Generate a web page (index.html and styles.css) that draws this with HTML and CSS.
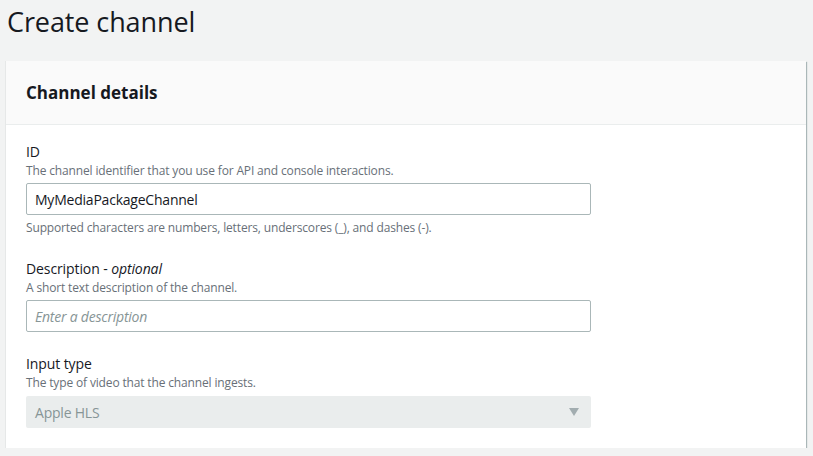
FILE: index.html
```html
<!DOCTYPE html>
<html>
<head>
<meta charset="utf-8">
<link rel="stylesheet" href="styles.css">
</head>
<body>
<h1 class="page-title">Create channel</h1>
<section class="card">
  <header class="card-header"><h2>Channel details</h2></header>
  <div class="card-body">
    <div class="field">
      <label class="label">ID</label>
      <div class="desc">The channel identifier that you use for API and console interactions.</div>
      <div class="input">MyMediaPackageChannel</div>
      <div class="hint">Supported characters are numbers, letters, underscores (_), and dashes (-).</div>
    </div>
    <div class="field">
      <label class="label">Description - <i>optional</i></label>
      <div class="desc">A short text description of the channel.</div>
      <div class="input placeholder">Enter a description</div>
    </div>
    <div class="field field-last">
      <label class="label">Input type</label>
      <div class="desc">The type of video that the channel ingests.</div>
      <div class="select">
        <span>Apple HLS</span>
        <svg class="caret" width="10" height="8" viewBox="0 0 10 8"><path d="M0 0H10L5 8Z" fill="#a2adb0"/></svg>
      </div>
    </div>
  </div>
</section>
</body>
</html>
```
FILE: styles.css
```css
* { box-sizing: border-box; }
html, body { margin: 0; padding: 0; }
body {
  background: #f2f3f3;
  font-family: "Open Sans", "Noto Sans", sans-serif;
  color: #16191f;
  padding: 0 7px 0 5px;
}
.page-title {
  margin: 0;
  padding: 3px 0 0 2px;
  height: 61px;
  font-size: 27px;
  font-weight: 400;
  line-height: 38px;
  letter-spacing: -0.1px;
}
.card {
  background: #fff;
  border-left: 1px solid #e6e8e8;
  box-shadow: 1px 1px 1px 0 #aab7b8;
  height: 387px;
}
.card-header {
  background: #fafafa;
  border-bottom: 1px solid #eaeded;
  height: 64px;
  display: flex;
  align-items: center;
  padding: 0 20px;
}
.card-header h2 {
  margin: 0;
  font-size: 17px;
  font-weight: 700;
  line-height: 22px;
}
.card-body {
  padding: 17px 20px 0 20px;
}
.field { margin-bottom: 22px; }
.field-last { margin-bottom: 0; }
.label {
  display: block;
  font-size: 14px;
  line-height: 20px;
  letter-spacing: -0.1px;
}
.label i { font-style: italic; }
.desc, .hint {
  font-size: 12px;
  line-height: 18px;
  color: #687078;
  letter-spacing: -0.15px;
}
.hint { margin-top: 4px; }
.input, .select {
  width: 565px;
  height: 32px;
  margin-top: 3px;
  font-size: 14px;
  letter-spacing: -0.22px;
  display: flex;
  align-items: center;
  padding: 0 8px;
}
.input {
  border: 1px solid #aab7b8;
  border-radius: 2px;
  background: #fff;
}
.placeholder {
  color: #879596;
  font-style: italic;
}
.select {
  margin-top: 4px;
  background: #eaeded;
  border-radius: 2px;
  color: #879596;
  justify-content: space-between;
  padding: 0 12px 0 9px;
}
.caret { display: block; }
```
